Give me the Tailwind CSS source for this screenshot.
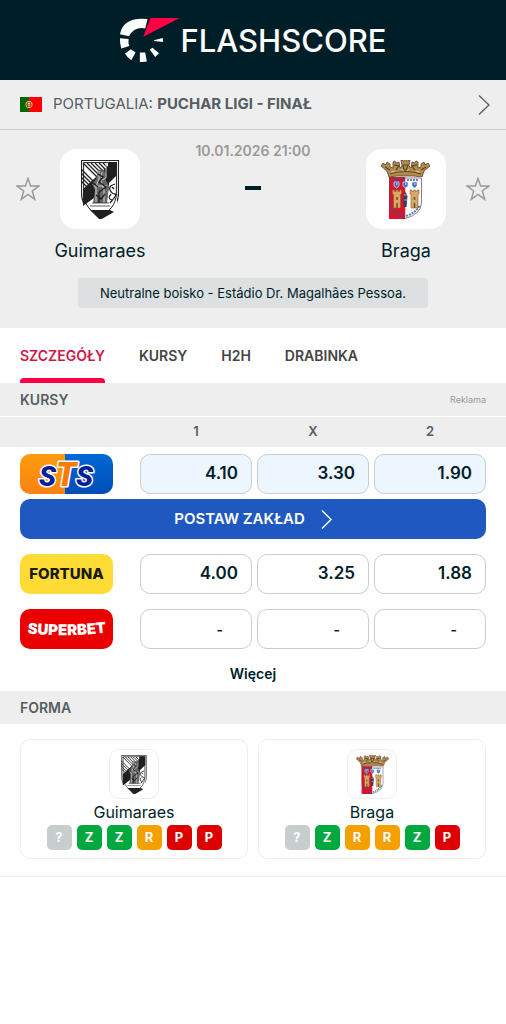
<!DOCTYPE html>
<html lang="pl">
<head>
<meta charset="utf-8">
<meta name="viewport" content="width=device-width, initial-scale=1">
<title>Guimaraes - Braga | Flashscore</title>
<script src="https://cdn.jsdelivr.net/npm/@tailwindcss/browser@4"></script>
</head>
<body class="bg-white text-[#001e28] font-['Inter','Liberation_Sans',sans-serif]">

<svg class="hidden" aria-hidden="true">
  <symbol id="star" viewBox="0 0 26 26"><path d="M13 1.500 15.800 9.800H24.800L17.600 15.200 20.300 24.200 13 18.800 5.700 24.200 8.400 15.200 1.200 9.800H10.200Z" fill="none" stroke="#999" stroke-width="1.600"/></symbol>
  <symbol id="guimaraes" viewBox="0 0 38 59">
    <clipPath id="gs"><path d="M2.6 2.6H35.4V33C35.4 45 27 53 19 56.400C11 53 2.600 45 2.600 33Z"/></clipPath>
    <path d="M.5.5H37.500V33C37.500 46 28 55 19 58.500C10 55 .5 46 .5 33Z" fill="#fff" stroke="#222" stroke-width="1.200"/>
    <g clip-path="url(#gs)">
      <path d="M2 2H36V58H2Z" fill="#fff"/>
      <path d="M-2 7 18 27M-2 11 16 29M2 3 20 21M6 3 22 19M10 3 24 17M14 3 24 13M18 3 26 11M22 3 28 9M-2 15 12 29M-2 19 8 29" stroke="#222" stroke-width="1.300"/>
      <path d="M2 29 27 6V2H36V15L28 23V38H13L2 46Z" fill="#221f20"/>
      <path d="M36 17 28 25 25 47H7L13 39V59H36Z" fill="#fff"/>
      <path d="M9 50H29L33 52 19 60Z" fill="#221f20"/>
      <path d="M17 10 22 9 25 14 24 19 28 26 26 43 12 43 14 30 11 24 15 19Z" fill="#666"/>
      <path d="M18 11V19L15 26V42M21 12 20 22 23 30V43M25 2V18L21 20M13 26H26" stroke="#ddd" stroke-width=".9" fill="none"/>
      <path d="M17 14 22 17 18 22 25 27 18 32V43M12 23 17 27M15 35 20 39 24 34" stroke="#1c1c1c" stroke-width="1.300" fill="none"/>
      <path d="M11 43H28M9 46H29" stroke="#333" stroke-width=".8"/>
      <path d="M34 24Q27 26 29 30T34 34T29 43M30 34Q26 39 31 40M33 29 31 27" stroke="#222" stroke-width="1.300" fill="none"/>
    </g>
    <path d="M2.600 2.600H35.400V33C35.400 45 27 53 19 56.400C11 53 2.600 45 2.600 33Z" fill="none" stroke="#222" stroke-width="1"/>
  </symbol>
  <symbol id="braga" viewBox="0 0 49 59">
    <path d="M8 17 6 11 0 6 2 3 5 5 6 2 9 4 9 7 12 8 12 2 14 1 15 3 18 2 19 8 21 6 20 0 23 1 24.500 0 26 1 29 0 28 6 30 8 31 2 34 3 35 1 37 2 37 8 40 7 40 4 43 2 44 5 47 3 49 6 43 11 41 17 33 16H16Z" fill="#b28b50" stroke="#59401f" stroke-width=".8"/>
    <path d="M9 14Q24.500 9 40 14M4 7 9 10M13 5 18 6 15 10M22 5H27L25 10H23ZM36 5 31 6 34 10M45 7 40 10" stroke="#5c4323" stroke-width="1.200" fill="none"/>
    <path d="M10 12 14 11M20 9 23 11M28 9 26 11M35 11 39 12" stroke="#e5c78b" stroke-width="1"/>
    <clipPath id="bs"><path d="M8.500 18H40.500V43Q40 54 24.500 58.500Q9 54 8.500 43Z"/></clipPath>
    <g clip-path="url(#bs)">
      <path d="M8 17H24.500V59H8Z" fill="#d8152b"/><path d="M24.500 17H41V59H24.500Z" fill="#fff"/>
      <path d="M12 20H23M26 20H38" stroke="#35579b" stroke-width="1.600" stroke-dasharray="2 1"/>
      <g fill="#3c6ec3" stroke="#e4ebf7" stroke-width=".7"><path d="M13 22H18V26L15.500 28 13 26ZM22 22H27V26L24.500 28 22 26ZM31 22H36V26L33.500 28 31 26Z"/></g>
      <path d="M15 24H16.500M24 24H25.500M33 24H34.500" stroke="#fff"/>
      <g fill="#d8a866" stroke="#8a6030" stroke-width=".6"><path id="tower" d="M11.500 30H13.500V31.500H15V30H17V31.500H18.500V30H20.500V34H19.500V48H12.500V34H11.500Z"/><use href="#tower" x="17.500"/></g>
      <path d="M16 37V40M16 43V48M33.500 37V40M33.500 43V48" stroke="#744c25" stroke-width="1.500"/>
      <path d="M24.500 32 26.500 36 25.500 47 23 47 22 38Z" fill="#2e3f68"/><path d="M23 35H26M23 40H26" stroke="#d7a76d"/>
      <path d="M11 47Q15 54 23 56" stroke="#833a69" stroke-width="2" stroke-dasharray="2 1" fill="none"/><path d="M25 56Q35 53 39 45" stroke="#477cb6" stroke-width="2" stroke-dasharray="2 1" fill="none"/>
    </g>
    <path d="M8.500 18H40.500V43Q40 54 24.500 58.500Q9 54 8.500 43Z" fill="none" stroke="#634551" stroke-width=".7"/>
  </symbol>
</svg>

<header class="flex h-20 items-center justify-center bg-[#001e28]">
  <a href="#" class="flex items-center text-[31px] leading-none font-medium text-white" aria-label="Flashscore">
    <svg class="h-[46px] w-[61px]" viewBox="54 48 184 138" aria-hidden="true">
      <g fill="#fff"><path d="M140 54 133 82Q100 76 84 106L57 100Q67 46 140 54Z"/><path d="M57 112 83 114Q81 126 85 135L61 143Q56 128 57 112Z"/><path d="M72 158 90 145 104 155 91 178Q80 172 72 158Z"/><path d="M117 155H133L138 182Q128 184 117 183Z"/><path d="M147 146 155 140 175 157 163 168Z"/><path d="M159 118 186 111 187 123 161 120Z"/></g>
      <path d="M149 51H237L127 107Z" fill="#ff0046"/>
    </svg>
    <span>FLASHSCORE</span>
  </a>
</header>

<main>
  <section class="bg-[#eee]">
    <a href="#" class="flex h-[50px] items-center border-b border-[#c8cdcd] pr-4 pl-5 text-[15px] text-[#555e61]">
      <svg class="mr-[11px] h-[15px] w-[22px]" viewBox="0 0 22 15" aria-hidden="true"><path d="M0 0H9V15H0Z" fill="#060"/><path d="M9 0H22V15H9Z" fill="#f00"/><circle cx="9" cy="7.500" r="3.200" fill="none" stroke="#e8d44a" stroke-width="1"/><path d="M7.500 5.500H10.500V8L9 10 7.500 8Z" fill="#fff" stroke="#d22" stroke-width=".7"/><path d="M9 6.500V8.500" stroke="#129"/></svg>
      <span>PORTUGALIA: <b class="font-bold">PUCHAR LIGI - FINAŁ</b></span>
      <svg class="ml-auto h-5 w-3" viewBox="0 0 12 20" fill="none" stroke="#555e61" stroke-width="1.300" aria-hidden="true"><path d="M1 .5 11 10 1 19.500"/></svg>
    </a>
    <div class="flex items-start justify-between px-4 pt-[19px]">
      <div class="flex gap-3">
        <button class="mt-7 size-6" aria-label="Obserwuj Guimaraes"><svg class="size-full overflow-visible"><use href="#star"/></svg></button>
        <div class="flex w-24 flex-col items-center">
          <div class="flex size-20 items-center justify-center rounded-2xl bg-white"><svg class="h-[59px] w-[38px]" role="img" aria-label="Herb Guimaraes"><use href="#guimaraes"/></svg></div>
          <a href="#" class="mt-[10px] text-[18px] leading-6">Guimaraes</a>
        </div>
      </div>
      <div class="-mt-2 flex flex-col items-center">
        <time class="text-[14px] leading-5 font-semibold text-[#999]">10.01.2026 21:00</time>
        <span class="mt-[25px] h-1 w-4 bg-[#001e28]"></span>
      </div>
      <div class="flex flex-row-reverse gap-3">
        <button class="mt-7 size-6" aria-label="Obserwuj Braga"><svg class="size-full overflow-visible"><use href="#star"/></svg></button>
        <div class="flex w-24 flex-col items-center">
          <div class="flex size-20 items-center justify-center rounded-2xl bg-white"><svg class="h-[59px] w-[49px]" role="img" aria-label="Herb Braga"><use href="#braga"/></svg></div>
          <a href="#" class="mt-[10px] text-[18px] leading-6">Braga</a>
        </div>
      </div>
    </div>
    <div class="flex justify-center pt-[15px] pb-5">
      <p class="rounded-[4px] bg-[#dce0e1] px-[22px] py-[5px] text-[13px] leading-5">Neutralne boisko - Estádio Dr. Magalhães Pessoa.</p>
    </div>
  </section>

  <nav class="flex h-[55px] gap-[34px] px-5 text-[14px] font-semibold text-[#444]">
    <a href="#" aria-current="page" class="relative flex items-center text-[#cf1747]">SZCZEGÓŁY<span class="absolute inset-x-0 bottom-0 h-[5px] rounded-t-sm bg-[#ff0046]"></span></a>
    <a href="#" class="flex items-center">KURSY</a>
    <a href="#" class="flex items-center">H2H</a>
    <a href="#" class="flex items-center">DRABINKA</a>
  </nav>

  <section>
    <div class="flex h-[34px] items-center justify-between border-b border-white bg-[#eee] px-5">
      <h2 class="text-[14px] font-semibold text-[#555e61]">KURSY</h2>
      <span class="text-[9px] text-[#999]">Reklama</span>
    </div>
    <table class="block w-full text-[17px] font-semibold">
      <thead class="block bg-[#eee] text-[13px] text-[#555e61]">
        <tr class="grid h-[30px] grid-cols-[115px_1fr_1fr_1fr] items-center gap-x-[5px] px-5">
          <th></th><th class="font-semibold">1</th><th class="font-semibold">X</th><th class="font-semibold">2</th>
        </tr>
      </thead>
      <tbody class="flex flex-col gap-[15px] px-5 pt-[7px]">
        <tr class="grid grid-cols-[115px_1fr_1fr_1fr] gap-x-[5px] gap-y-[5px]">
          <td><a href="#" aria-label="STS"><svg class="h-10 w-[93px] rounded-[10px]" viewBox="0 0 93 40">
            <defs><linearGradient id="or" x2="0" y2="1"><stop stop-color="#ff9c0c"/><stop offset="1" stop-color="#f98212"/></linearGradient><linearGradient id="bl" x2="0" y2="1"><stop stop-color="#0068d6"/><stop offset="1" stop-color="#004db5"/></linearGradient></defs>
            <path d="M0 0H45V40H0Z" fill="url(#or)"/><path d="M45 0H93V40H45Z" fill="url(#bl)"/>
            <text x="46" y="32" text-anchor="middle" font-family="Roboto, sans-serif" font-weight="900" font-style="italic" font-size="28" stroke="#fff" stroke-width="3" stroke-linejoin="round" paint-order="stroke" fill="#00209a">S<tspan font-size="33" fill="#ff7a00">T</tspan>S</text>
          </svg></a></td>
          <td><button class="h-10 w-full rounded-[10px] border border-[#c8cdcd] bg-[#edf6ff] pr-[13px] text-right">4.10</button></td>
          <td><button class="h-10 w-full rounded-[10px] border border-[#c8cdcd] bg-[#edf6ff] pr-[13px] text-right">3.30</button></td>
          <td><button class="h-10 w-full rounded-[10px] border border-[#c8cdcd] bg-[#edf6ff] pr-[13px] text-right">1.90</button></td>
          <td class="col-span-4"><a href="#" class="flex h-10 items-center justify-center gap-4 rounded-[10px] bg-[#2058c1] text-[15px] text-white">POSTAW ZAKŁAD<svg class="h-[19px] w-[11px]" viewBox="0 0 11 19" fill="none" stroke="#fff" stroke-width="1.400" aria-hidden="true"><path d="M1 .5 10 9.500 1 18.500"/></svg></a></td>
        </tr>
        <tr class="grid grid-cols-[115px_1fr_1fr_1fr] gap-x-[5px]">
          <td><a href="#" class="flex h-10 w-[93px] items-center justify-center rounded-[10px] bg-[#ffdb35] text-[15px] font-extrabold text-[#1c1a10]">FORTUNA</a></td>
          <td><button class="h-10 w-full rounded-[10px] border border-[#c8cdcd] pr-[13px] text-right">4.00</button></td>
          <td><button class="h-10 w-full rounded-[10px] border border-[#c8cdcd] pr-[13px] text-right">3.25</button></td>
          <td><button class="h-10 w-full rounded-[10px] border border-[#c8cdcd] pr-[13px] text-right">1.88</button></td>
        </tr>
        <tr class="grid grid-cols-[115px_1fr_1fr_1fr] gap-x-[5px]">
          <td><a href="#" aria-label="Superbet"><svg class="h-10 w-[93px] rounded-[10px]" viewBox="0 0 93 40"><path d="M0 0H93V40H0Z" fill="#eb0000"/><path id="arc" d="M4 24Q46.500 29 90 23" fill="none"/><text font-family="Inter, sans-serif" font-size="15" font-weight="900" fill="#fff" text-anchor="middle"><textPath href="#arc" startOffset="50%">SUPERBET</textPath></text></svg></a></td>
          <td><button class="h-10 w-full rounded-[10px] border border-[#c8cdcd] pr-7 text-right text-[14px]">-</button></td>
          <td><button class="h-10 w-full rounded-[10px] border border-[#c8cdcd] pr-7 text-right text-[14px]">-</button></td>
          <td><button class="h-10 w-full rounded-[10px] border border-[#c8cdcd] pr-7 text-right text-[14px]">-</button></td>
        </tr>
      </tbody>
    </table>
    <div class="flex justify-center pt-[15px] pb-[7px]"><button class="text-[14px] leading-5 font-semibold">Więcej</button></div>
  </section>

  <section class="border-b border-[#eee]">
    <div class="flex h-[33px] items-center bg-[#eee] px-5"><h2 class="text-[14px] font-semibold text-[#555e61]">FORMA</h2></div>
    <div class="grid grid-cols-2 gap-[10px] px-5 pt-[15px] pb-[17px]">
      <article class="flex flex-col items-center rounded-[10px] border border-[#eee] pt-[9px] pb-2">
        <div class="flex size-[50px] items-center justify-center rounded-[10px] border border-[#eee]"><svg class="h-[39px] w-[26px]" role="img" aria-label="Herb Guimaraes"><use href="#guimaraes"/></svg></div>
        <h3 class="mt-[3px] text-[16px] leading-5">Guimaraes</h3>
        <div class="mt-[3px] flex gap-[5px] text-center text-[13px] leading-[25px] font-bold text-white">
          <span class="size-[25px] rounded-[5px] bg-[#c8cdcd]">?</span><span class="size-[25px] rounded-[5px] bg-[#00a83f]">Z</span><span class="size-[25px] rounded-[5px] bg-[#00a83f]">Z</span><span class="size-[25px] rounded-[5px] bg-[#f3a000]">R</span><span class="size-[25px] rounded-[5px] bg-[#dc0000]">P</span><span class="size-[25px] rounded-[5px] bg-[#dc0000]">P</span>
        </div>
      </article>
      <article class="flex flex-col items-center rounded-[10px] border border-[#eee] pt-[9px] pb-2">
        <div class="flex size-[50px] items-center justify-center rounded-[10px] border border-[#eee]"><svg class="h-[39px] w-[33px]" role="img" aria-label="Herb Braga"><use href="#braga"/></svg></div>
        <h3 class="mt-[3px] text-[16px] leading-5">Braga</h3>
        <div class="mt-[3px] flex gap-[5px] text-center text-[13px] leading-[25px] font-bold text-white">
          <span class="size-[25px] rounded-[5px] bg-[#c8cdcd]">?</span><span class="size-[25px] rounded-[5px] bg-[#00a83f]">Z</span><span class="size-[25px] rounded-[5px] bg-[#f3a000]">R</span><span class="size-[25px] rounded-[5px] bg-[#f3a000]">R</span><span class="size-[25px] rounded-[5px] bg-[#00a83f]">Z</span><span class="size-[25px] rounded-[5px] bg-[#dc0000]">P</span>
        </div>
      </article>
    </div>
  </section>
</main>
</body>
</html>
